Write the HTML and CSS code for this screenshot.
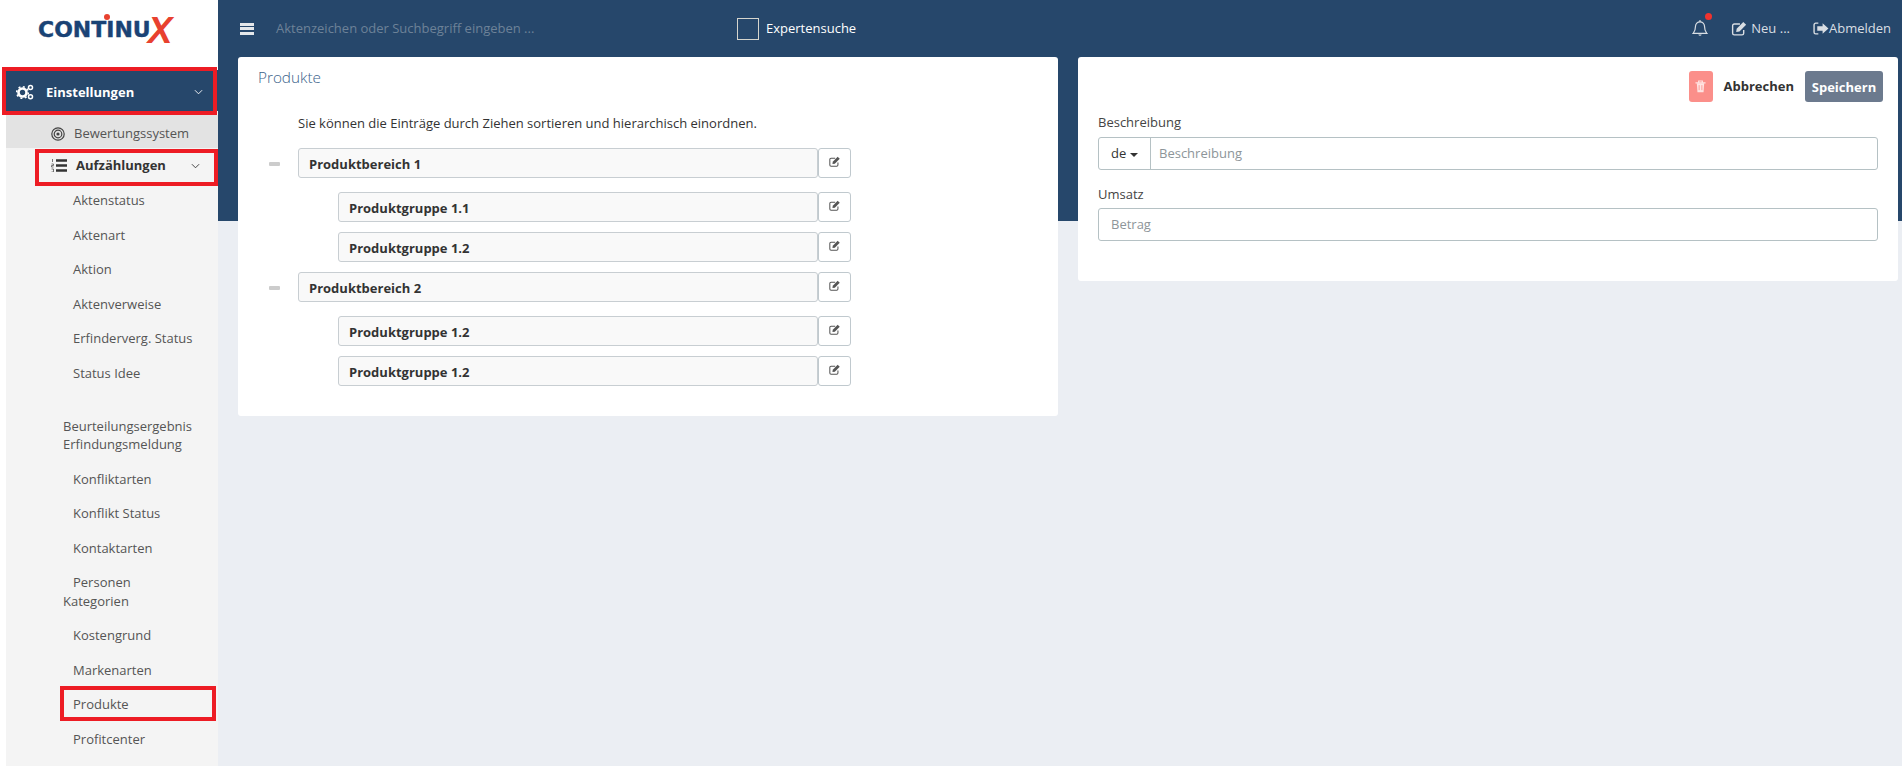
FILE: index.html
```html
<!DOCTYPE html>
<html lang="de">
<head>
<meta charset="utf-8">
<title>Produkte</title>
<link rel="stylesheet" href="styles.css">
</head>
<body>
<svg class="defs" width="0" height="0" aria-hidden="true">
  <symbol id="edit" viewBox="0 0 16 16">
    <path d="M13 9.500V13a1.800 1.800 0 0 1-1.800 1.800H3A1.800 1.800 0 0 1 1.200 13V5A1.800 1.800 0 0 1 3 3.200h6" fill="none" stroke="currentColor" stroke-width="1.500"/>
    <path d="M5.500 8.200 12.600 1.100l3 3-7.100 7.100-3.500.5z" fill="currentColor"/>
  </symbol>
  <symbol id="chev" viewBox="0 0 10 6">
    <path d="M1 1l4 4 4-4" fill="none" stroke="currentColor" stroke-width="1"/>
  </symbol>
</svg>
<div class="page">
  <aside class="sidebar">
    <div class="logo"><span class="logo-word">CONTINU<span class="logo-dot"></span></span><span class="logo-x">X</span></div>
    <div class="menu-head">
      <svg class="cogs" viewBox="0 0 18 16"><circle cx="6.500" cy="8.500" r="4" fill="none" stroke="#fff" stroke-width="2.600"/><circle cx="6.500" cy="8.500" r="5.800" fill="none" stroke="#fff" stroke-width="1.600" stroke-dasharray="2 2.500"/><circle cx="14.500" cy="3.500" r="2" fill="none" stroke="#fff" stroke-width="1.500"/><circle cx="14.500" cy="12.800" r="2" fill="none" stroke="#fff" stroke-width="1.500"/></svg>
      <span class="menu-head-text">Einstellungen</span>
      <svg class="chev"><use href="#chev"/></svg>
    </div>
    <div class="menu-sub">
      <svg class="target" viewBox="0 0 14 14"><circle cx="7" cy="7" r="6.200" fill="none" stroke="#444" stroke-width="1.200"/><circle cx="7" cy="7" r="3.800" fill="none" stroke="#444" stroke-width="1.200"/><circle cx="7" cy="7" r="1.600" fill="#444"/></svg>
      <span>Bewertungssystem</span>
    </div>
    <div class="menu-group">
      <svg class="listicon" viewBox="0 0 16 13"><path d="M5 1.500h11M5 6.500h11M5 11.500h11" stroke="#333" stroke-width="2.300"/><path d="M1.500 0v3M0.500 5h2v1.500H0.500V8h2M0.500 10h2v3H0.500" stroke="#555" stroke-width=".8" fill="none"/></svg>
      <span class="menu-group-text">Aufzählungen</span>
      <svg class="chev"><use href="#chev"/></svg>
    </div>
    <ul class="items">
      <li>Aktenstatus</li>
      <li>Aktenart</li>
      <li>Aktion</li>
      <li>Aktenverweise</li>
      <li>Erfinderverg. Status</li>
      <li>Status Idee</li>
      <li>&nbsp;<br>Beurteilungsergebnis<br>Erfindungsmeldung</li>
      <li>Konfliktarten</li>
      <li>Konflikt Status</li>
      <li>Kontaktarten</li>
      <li>Personen<br>Kategorien</li>
      <li>Kostengrund</li>
      <li>Markenarten</li>
      <li>Produkte</li>
      <li>Profitcenter</li>
    </ul>
    <div class="mark mark-head"></div>
    <div class="mark mark-group"></div>
    <div class="mark mark-item"></div>
  </aside>
  <main class="main">
    <header class="topbar">
      <div class="burger"><i></i><i></i><i></i></div>
      <div class="search">Aktenzeichen oder Suchbegriff eingeben ...</div>
      <div class="expert"><span class="checkbox"></span><span>Expertensuche</span></div>
      <div class="top-actions">
        <span class="bell">
          <svg viewBox="0 0 16 17" width="16" height="17"><path d="M8 1.800a4.500 4.500 0 0 0-4.500 4.500c0 4.500-1.200 5.800-2.300 7h13.600c-1.100-1.200-2.300-2.500-2.300-7A4.500 4.500 0 0 0 8 1.800z" fill="none" stroke="currentColor" stroke-width="1.200"/><path d="M6.300 14.600a1.800 1.800 0 0 0 3.400 0z" fill="currentColor"/><path d="M8 0v2" stroke="currentColor" stroke-width="1.200"/></svg>
          <span class="bell-dot"></span>
        </span>
        <span class="top-link neu"><svg class="top-icon"><use href="#edit"/></svg>Neu ...</span>
        <span class="top-link logout"><svg class="top-icon" viewBox="0 0 15 13"><path d="M5 1.500H2.500A1.500 1.500 0 0 0 1 3v7a1.500 1.500 0 0 0 1.500 1.500H5" fill="none" stroke="currentColor" stroke-width="1.300"/><path d="M4 4.500h5V1.500l5.500 5-5.500 5V8.500H4z" fill="currentColor"/></svg>Abmelden</span>
      </div>
    </header>
    <div class="cards">
      <section class="card card-tree">
        <h2 class="card-title">Produkte</h2>
        <p class="hint">Sie können die Einträge durch Ziehen sortieren und hierarchisch einordnen.</p>
        <div class="tree">
          <div class="node top"><span class="minus"></span><div class="bar">Produktbereich 1</div><button class="edit"><svg><use href="#edit"/></svg></button></div>
          <div class="node child first"><div class="bar">Produktgruppe 1.1</div><button class="edit"><svg><use href="#edit"/></svg></button></div>
          <div class="node child"><div class="bar">Produktgruppe 1.2</div><button class="edit"><svg><use href="#edit"/></svg></button></div>
          <div class="node top"><span class="minus"></span><div class="bar">Produktbereich 2</div><button class="edit"><svg><use href="#edit"/></svg></button></div>
          <div class="node child first"><div class="bar">Produktgruppe 1.2</div><button class="edit"><svg><use href="#edit"/></svg></button></div>
          <div class="node child"><div class="bar">Produktgruppe 1.2</div><button class="edit"><svg><use href="#edit"/></svg></button></div>
        </div>
      </section>
      <section class="card card-form">
        <div class="form-actions">
          <button class="btn-trash"><svg viewBox="0 0 12 14" width="11" height="13"><path d="M0.500 3h11M4 3V1h4v2" fill="none" stroke="#ffe4e2" stroke-width="1.300"/><path d="M2 3.500l.7 9.800h6.600L10 3.500z" fill="#ffe4e2"/><path d="M4.500 5.500v5.500M7.500 5.500v5.500" stroke="#fb8f8a" stroke-width=".9"/></svg></button>
          <span class="btn-cancel">Abbrechen</span>
          <button class="btn-save">Speichern</button>
        </div>
        <label class="label">Beschreibung</label>
        <div class="input-group"><span class="lang">de<i class="caret"></i></span><span class="input-text">Beschreibung</span></div>
        <label class="label label-second">Umsatz</label>
        <div class="input-group amount-group"><span class="input-text amount">Betrag</span></div>
      </section>
    </div>
  </main>
</div>
</body>
</html>
```
FILE: styles.css
```css
* { box-sizing: border-box; }
html, body { margin: 0; height: 100%; overflow: hidden; }
body { font: 13px/1.42857 "Open Sans", sans-serif; color: #333; background: #ebeef3; }
.defs { position: absolute; }
.page { display: grid; grid-template-columns: 218px 1fr; height: 766px; overflow: hidden; }

/* sidebar */
.sidebar { position: relative; background: #fff; height: 766px; overflow: hidden; }
.logo { height: 70px; padding: 0 0 10px 38px; display: flex; align-items: center; }
.logo-word { position: relative; font: 700 22px/1 "DejaVu Sans", sans-serif; -webkit-text-stroke: .4px #1a4375; color: #1a4375; }
.logo-dot { position: absolute; left: 66px; top: -5px; width: 6px; height: 6px; border-radius: 50%; background: #e8412f; }
.logo-x { font: italic 700 37px/1 "Liberation Sans", sans-serif; color: #e8412f; margin-left: -3px; }
.menu-head { height: 41px; margin-left: 6px; padding: 3px 0 0 10px; background: #26476b; color: #fff; display: flex; align-items: center; }
.cogs { width: 18px; height: 16px; flex: none; }
.menu-head-text { font-weight: 700; margin-left: 12px; }
.chev { width: 9px; height: 6px; color: currentColor; margin-left: auto; flex: none; }
.menu-head .chev { margin-right: 15px; }
.menu-sub { height: 37px; margin-left: 6px; padding: 4px 0 0 45px; background: #e3e3e3; display: flex; align-items: center; color: #555; border-top: 4px solid #f4f4f4; }
.target { width: 14px; height: 14px; margin-right: 9px; flex: none; }
.menu-group { height: 35px; margin-left: 6px; padding: 0 18px 0 45px; background: #f4f4f4; display: flex; align-items: center; }
.listicon { width: 16px; height: 13px; flex: none; }
.menu-group-text { font-weight: 700; margin-left: 9px; }
.items { list-style: none; margin: 0 0 0 6px; padding: 0 0 60px; background: #f4f4f4; color: #555; line-height: 18.500px; }
.items li { padding: 8px 10px 8px 57px; text-indent: 10px; }
.mark { position: absolute; border: 4px solid #ed1c24; }
.mark-head { left: 2px; top: 67px; width: 215px; height: 48px; }
.mark-group { left: 35px; top: 149px; width: 183px; height: 37px; }
.mark-item { left: 60px; top: 686px; width: 156px; height: 35px; }

/* main */
.main { background: linear-gradient(#26476b 221px, #ebeef3 221px); min-width: 0; }
.topbar { height: 57px; display: flex; align-items: center; color: #fff; padding-left: 22px; }
.burger { width: 14px; display: grid; gap: 1.500px; }
.burger i { height: 3px; background: #e4e7ea; }
.search { margin-left: 22px; width: 461px; color: #6d8298; }
.expert { display: flex; align-items: center; gap: 7px; }
.checkbox { width: 22px; height: 22px; border: 1px solid #d5d5cd; }
.top-actions { margin-left: auto; display: flex; align-items: center; color: #d9dee3; padding-right: 11px; }
.bell { position: relative; width: 16px; height: 17px; margin-right: 23px; }
.bell-dot { position: absolute; right: -4px; top: -7px; width: 7px; height: 7px; border-radius: 50%; background: #f0332e; }
.top-link { display: flex; align-items: center; }
.top-icon { width: 16px; height: 15px; flex: none; }
.neu .top-icon { margin-right: 4px; }
.logout { margin-left: 23px; }

/* cards */
.cards { display: flex; align-items: flex-start; gap: 20px; padding: 0 4px 0 20px; }
.card { flex: 1; background: #fff; border-radius: 3px; }
.card-tree { height: 359px; padding: 10px 20px 0; }
.card-title { margin: 0; font-size: 15.300px; line-height: 20px; font-weight: 300; color: #3a628a; }
.hint { margin: 26px 0 0 40px; line-height: 20px; }
.tree { margin-top: 15px; }
.node { display: flex; align-items: stretch; height: 30px; width: 593px; margin-top: 10px; }
.node.first { margin-top: 14px; }
.node:first-child { margin-top: 0; }
.node.top { padding-left: 40px; position: relative; }
.node.child { padding-left: 80px; }
.minus { position: absolute; left: 11px; top: 14px; width: 11px; height: 4px; border-radius: 1px; background: #ccc; }
.bar { flex: 1; background: #f9f9f9; border: 1px solid #c8ced2; border-radius: 3px; padding: 0 10px; font-weight: 700; line-height: 30px; color: #333; }
.edit { width: 33px; flex: none; padding: 0 0 3px; background: #fff; border: 1px solid #c0c9ce; border-radius: 3px; color: #555; display: flex; align-items: center; justify-content: center; }
.edit svg { width: 11px; height: 11px; }

.card-form { height: 224px; padding: 14px 20px 0; }
.form-actions { display: flex; align-items: center; justify-content: flex-end; height: 31px; margin-right: -5px; }
.btn-trash { width: 24px; height: 31px; padding: 0; border: 0; border-radius: 3px; background: #fb8f8a; display: flex; align-items: center; justify-content: center; }
.btn-cancel { font-weight: 700; margin: 0 11px 0 11px; color: #333; }
.btn-save { width: 78px; height: 31px; padding: 0; border: 0; border-radius: 3px; background: #6c7a8e; color: #fff; font: 700 13px "Open Sans", sans-serif; }
.label { display: block; margin-top: 10px; line-height: 20px; color: #444; }
.label-second { margin-top: 14px; }
.input-group { display: flex; align-items: stretch; height: 33px; margin-top: 5px; border: 1px solid #b5c1c4; border-radius: 3px; background: #fff; }
.amount-group { margin-top: 4px; }
.lang { width: 52px; border-right: 1px solid #b5c1c4; padding-left: 12px; line-height: 31px; color: #333; }
.caret { display: inline-block; margin-left: 4px; vertical-align: middle; border: 4px solid transparent; border-top-color: #333; border-bottom: 0; }
.input-text { padding-left: 8px; line-height: 31px; color: #8d9599; }
.amount { padding-left: 12px; }
```
